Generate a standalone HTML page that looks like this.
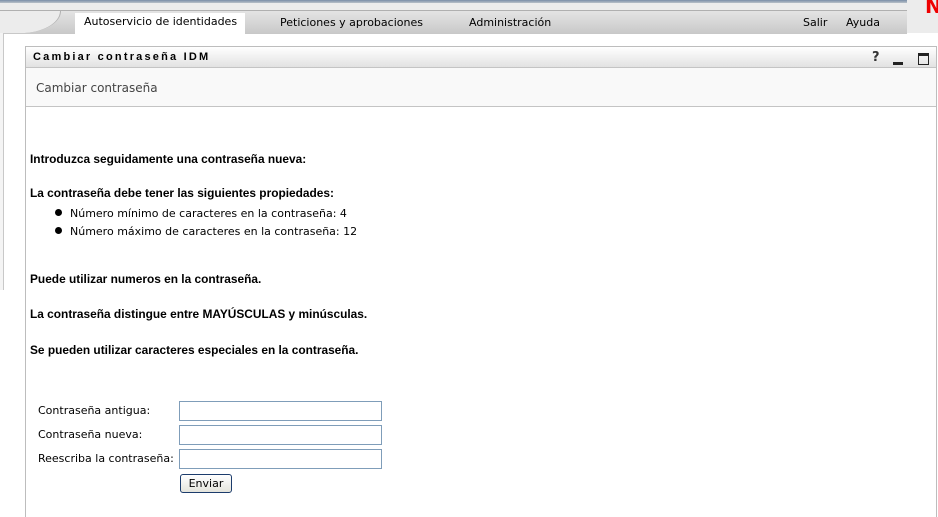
<!DOCTYPE html>
<html><head><meta charset="utf-8"><style>
body{margin:0;width:938px;height:516px;background:#fff;position:relative;overflow:hidden;font-family:"DejaVu Sans","Liberation Sans",sans-serif;font-size:11px;color:#000}
.a{position:absolute}
.t{position:absolute;white-space:nowrap}
b{font-weight:bold;font-family:"Liberation Sans",sans-serif;font-size:11.9px}
input{position:absolute;border:1px solid #7f9db9;height:20px;width:203px;box-sizing:border-box;margin:0;padding:0;background:#fff}
</style></head><body>
<div class="a" style="left:0;top:0;width:938px;height:3px;background:linear-gradient(#7a8ea8,#b8c0c8)"></div>
<div class="a" style="left:0;top:3px;width:938px;height:9px;background:#ececec"></div>
<div class="a" style="left:0;top:10px;width:907px;height:23px;background:linear-gradient(#e4e4e4,#c8c8c8);border-top:1px solid #b0b0b0"></div>
<div class="a" style="left:0;top:11px;width:60px;height:22px;background:#ececec;border-bottom-right-radius:40px 22px;border-right:1px solid #b0b0b0"></div>
<div class="a" style="left:75px;top:13px;width:170px;height:21px;background:#fff"></div>
<div class="t" style="left:84px;top:15px">Autoservicio de identidades</div>
<div class="t" style="left:280px;top:16px">Peticiones y aprobaciones</div>
<div class="t" style="left:469px;top:16px">Administración</div>
<div class="t" style="left:803px;top:16px">Salir</div>
<div class="t" style="left:846px;top:16px">Ayuda</div>
<div class="a" style="left:907px;top:0;width:31px;height:33px;background:#ececec"></div>
<div class="t" style="left:925px;top:-6px;color:#e00;font-weight:bold;font-size:20px">N</div>
<div class="a" style="left:0;top:33px;width:3px;height:257px;border-right:1px solid #c8c8c8;background:#f4f4f4"></div>
<div class="a" style="left:25px;top:46px;width:910px;height:470px;border:1px solid #bdbdbd;border-bottom:none"></div>
<div class="a" style="left:26px;top:47px;width:910px;height:20px;background:linear-gradient(#fff,#e2e2e2);border-bottom:1px solid #c4c4c4"></div>
<div class="t" style="left:33px;top:51px;font-weight:bold;letter-spacing:2.2px;font-size:11px;font-family:'Liberation Sans',sans-serif">Cambiar contraseña IDM</div>
<div class="t" style="left:872px;top:50px;font-weight:bold;font-size:13px;color:#333">?</div>
<div class="a" style="left:893px;top:62px;width:10px;height:3px;background:#222"></div>
<div class="a" style="left:918px;top:53px;width:9px;height:8px;border:1px solid #222;border-top-width:3px"></div>
<div class="a" style="left:26px;top:68px;width:910px;height:38px;background:#f9f9f9;border-bottom:1px solid #c4c4c4"></div>
<div class="t" style="left:36px;top:81px;color:#444;font-size:12px">Cambiar contraseña</div>
<div class="t" style="left:30px;top:152px"><b>Introduzca seguidamente una contraseña nueva:</b></div>
<div class="t" style="left:30px;top:186px"><b>La contraseña debe tener las siguientes propiedades:</b></div>
<div class="a" style="left:55px;top:209px;width:7px;height:7px;border-radius:50%;background:#000"></div>
<div class="t" style="left:70px;top:207px">Número mínimo de caracteres en la contraseña: 4</div>
<div class="a" style="left:55px;top:227px;width:7px;height:7px;border-radius:50%;background:#000"></div>
<div class="t" style="left:70px;top:225px">Número máximo de caracteres en la contraseña: 12</div>
<div class="t" style="left:30px;top:272px"><b>Puede utilizar numeros en la contraseña.</b></div>
<div class="t" style="left:30px;top:307px"><b>La contraseña distingue entre MAYÚSCULAS y minúsculas.</b></div>
<div class="t" style="left:30px;top:343px"><b>Se pueden utilizar caracteres especiales en la contraseña.</b></div>
<div class="t" style="left:38px;top:404px">Contraseña antigua:</div>
<div class="t" style="left:38px;top:428px">Contraseña nueva:</div>
<div class="t" style="left:38px;top:452px">Reescriba la contraseña:</div>
<input style="left:179px;top:401px"><input style="left:179px;top:425px"><input style="left:179px;top:449px">
<div class="a" style="left:180px;top:474px;width:52px;height:19px;border:1px solid #1c3c6c;border-radius:3px;background:linear-gradient(#fff,#e4e4dc);box-sizing:border-box;text-align:center;line-height:17px">Enviar</div>
</body></html>
